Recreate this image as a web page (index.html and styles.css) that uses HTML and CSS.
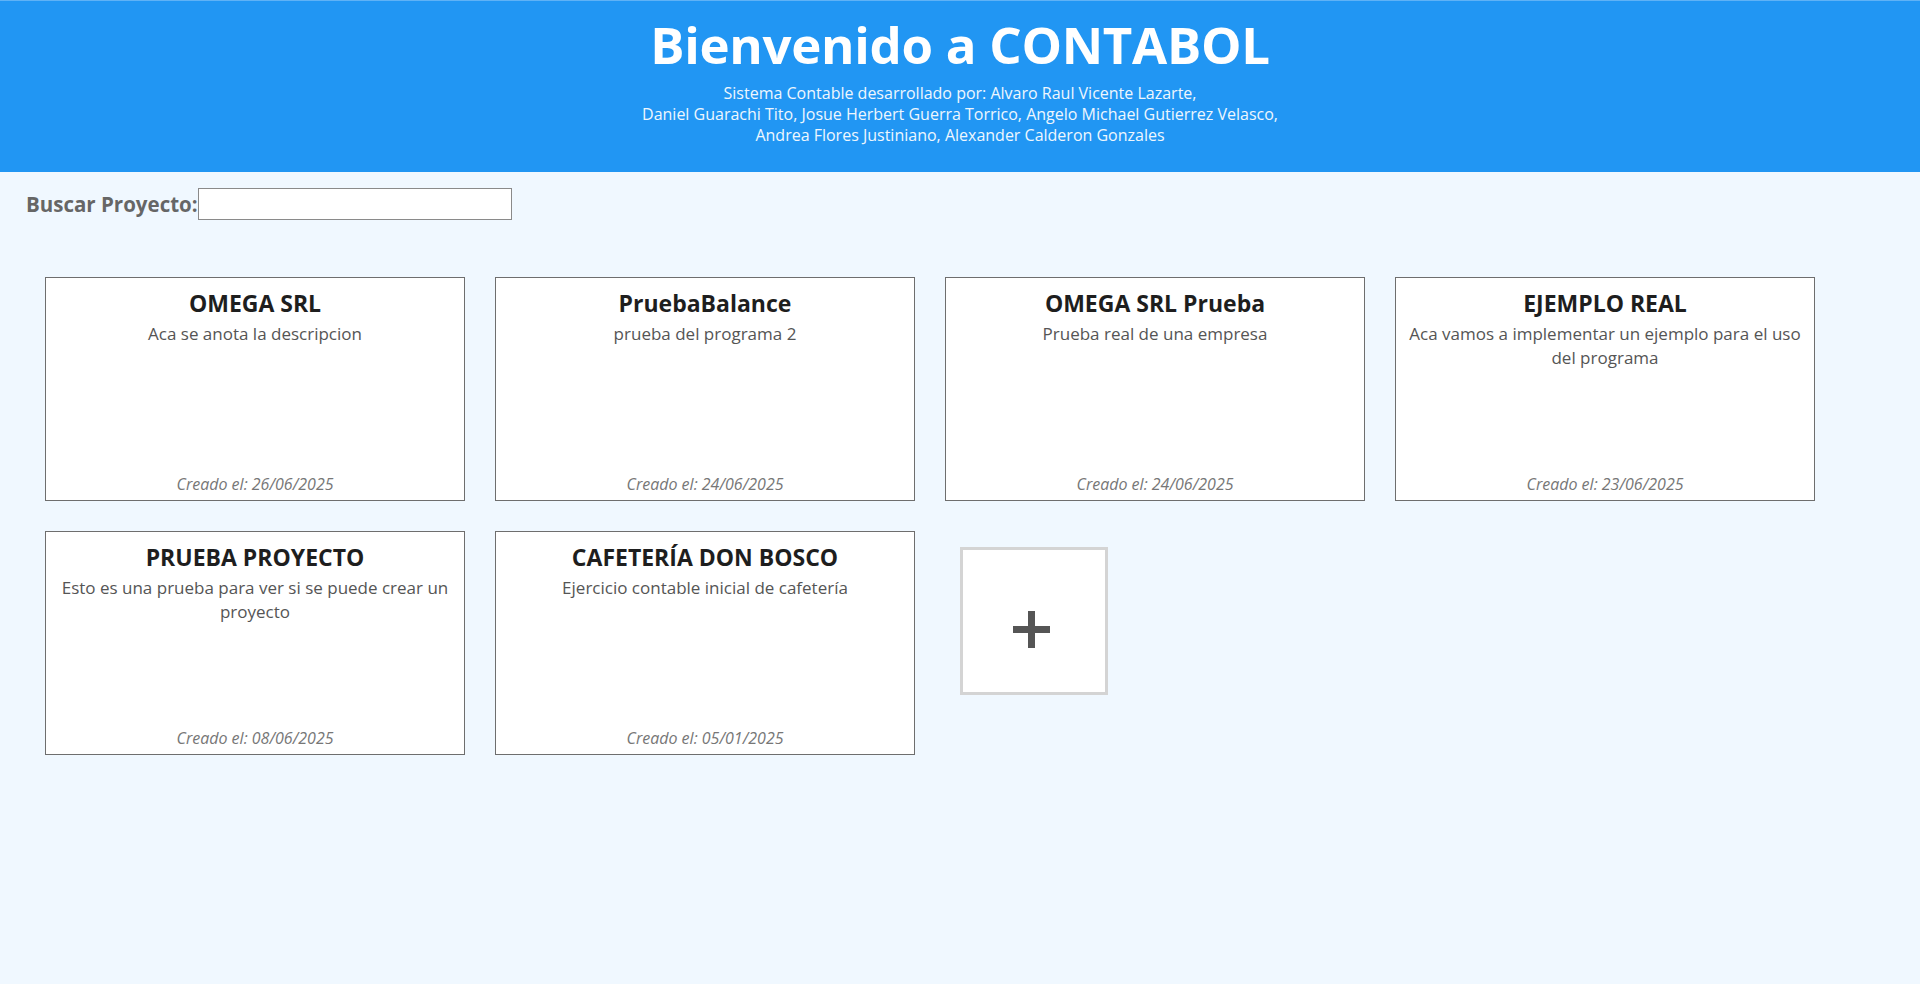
FILE: index.html
```html
<!DOCTYPE html>
<html lang="es">
<head>
<meta charset="utf-8">
<title>CONTABOL</title>
<link rel="stylesheet" href="styles.css">
</head>
<body>
<header class="hero">
  <h1 class="hero-title">Bienvenido a CONTABOL</h1>
  <p class="hero-sub">Sistema Contable desarrollado por: Alvaro Raul Vicente Lazarte,<br>Daniel Guarachi Tito, Josue Herbert Guerra Torrico, Angelo Michael Gutierrez Velasco,<br>Andrea Flores Justiniano, Alexander Calderon Gonzales</p>
</header>
<main class="main">
  <div class="search">
    <label class="search-label" for="q">Buscar Proyecto:</label>
    <input class="search-input" id="q" type="text">
  </div>
  <section class="grid">
    <article class="card">
      <h2 class="card-title">OMEGA SRL</h2>
      <p class="card-desc">Aca se anota la descripcion</p>
      <p class="card-date">Creado el: 26/06/2025</p>
    </article>
    <article class="card">
      <h2 class="card-title">PruebaBalance</h2>
      <p class="card-desc">prueba del programa 2</p>
      <p class="card-date">Creado el: 24/06/2025</p>
    </article>
    <article class="card">
      <h2 class="card-title">OMEGA SRL Prueba</h2>
      <p class="card-desc">Prueba real de una empresa</p>
      <p class="card-date">Creado el: 24/06/2025</p>
    </article>
    <article class="card">
      <h2 class="card-title">EJEMPLO REAL</h2>
      <p class="card-desc">Aca vamos a implementar un ejemplo para el uso del programa</p>
      <p class="card-date">Creado el: 23/06/2025</p>
    </article>
    <article class="card">
      <h2 class="card-title">PRUEBA PROYECTO</h2>
      <p class="card-desc">Esto es una prueba para ver si se puede crear un proyecto</p>
      <p class="card-date">Creado el: 08/06/2025</p>
    </article>
    <article class="card">
      <h2 class="card-title">CAFETERÍA DON BOSCO</h2>
      <p class="card-desc">Ejercicio contable inicial de cafetería</p>
      <p class="card-date">Creado el: 05/01/2025</p>
    </article>
    <button class="add-card" type="button" aria-label="Nuevo proyecto"><span class="plus"></span></button>
  </section>
</main>
</body>
</html>
```

FILE: styles.css
```css
* { box-sizing: border-box; }

body {
  margin: 0;
  background: #f0f8ff;
  font-family: "Open Sans", "Noto Sans", sans-serif;
  min-height: 984px;
}

.hero {
  background: #2196f3;
  border-top: 1px solid #5fb2f6;
  color: #fff;
  text-align: center;
  height: 172px;
  padding-top: 12px;
}

.hero-title {
  margin: 0;
  font-size: 51px;
  font-weight: 700;
  line-height: 62px;
  letter-spacing: -0.3px;
}

.hero-sub {
  margin: 8px 0 0;
  font-size: 16px;
  line-height: 21px;
  color: #eef6fe;
}

.main {
  padding: 16px 0 40px;
}

.search {
  display: flex;
  align-items: center;
  padding-left: 26px;
  height: 32px;
}

.search-label {
  font-size: 20.5px;
  font-weight: 700;
  color: #666;
}

.search-input {
  width: 314px;
  height: 32px;
  border: 1px solid #8a8a8a;
  background: #fff;
  margin: 0;
  padding: 2px 4px;
  font: inherit;
}

.grid {
  display: flex;
  flex-wrap: wrap;
  align-items: flex-start;
  gap: 30px;
  padding: 0 45px;
  margin-top: 57px;
  width: 1920px;
}

.card {
  width: 420px;
  height: 224px;
  background: #fff;
  border: 1px solid #6e6e6e;
  padding: 8px 10px 6px;
  display: flex;
  flex-direction: column;
  text-align: center;
}

.card-title {
  margin: 0;
  font-size: 23px;
  font-weight: 700;
  line-height: 34px;
  color: #1e1e1e;
}

.card-desc {
  margin: 2px 0 0;
  font-size: 17px;
  line-height: 24px;
  color: #555;
}

.card-date {
  margin: auto 0 0;
  font-size: 16px;
  font-style: italic;
  line-height: 20px;
  color: #777;
}

.add-card {
  width: 148px;
  height: 148px;
  margin: 16px 0 0 15px;
  background: #fff;
  border: 3px solid #d4d4d4;
  display: flex;
  align-items: center;
  justify-content: center;
  padding: 16px 6px 0 0;
  cursor: pointer;
}

.plus {
  position: relative;
  width: 37px;
  height: 37px;
}

.plus::before,
.plus::after {
  content: "";
  position: absolute;
  background: #555;
}

.plus::before {
  left: 15px;
  top: 0;
  width: 7px;
  height: 37px;
}

.plus::after {
  left: 0;
  top: 15px;
  width: 37px;
  height: 7px;
}
```
